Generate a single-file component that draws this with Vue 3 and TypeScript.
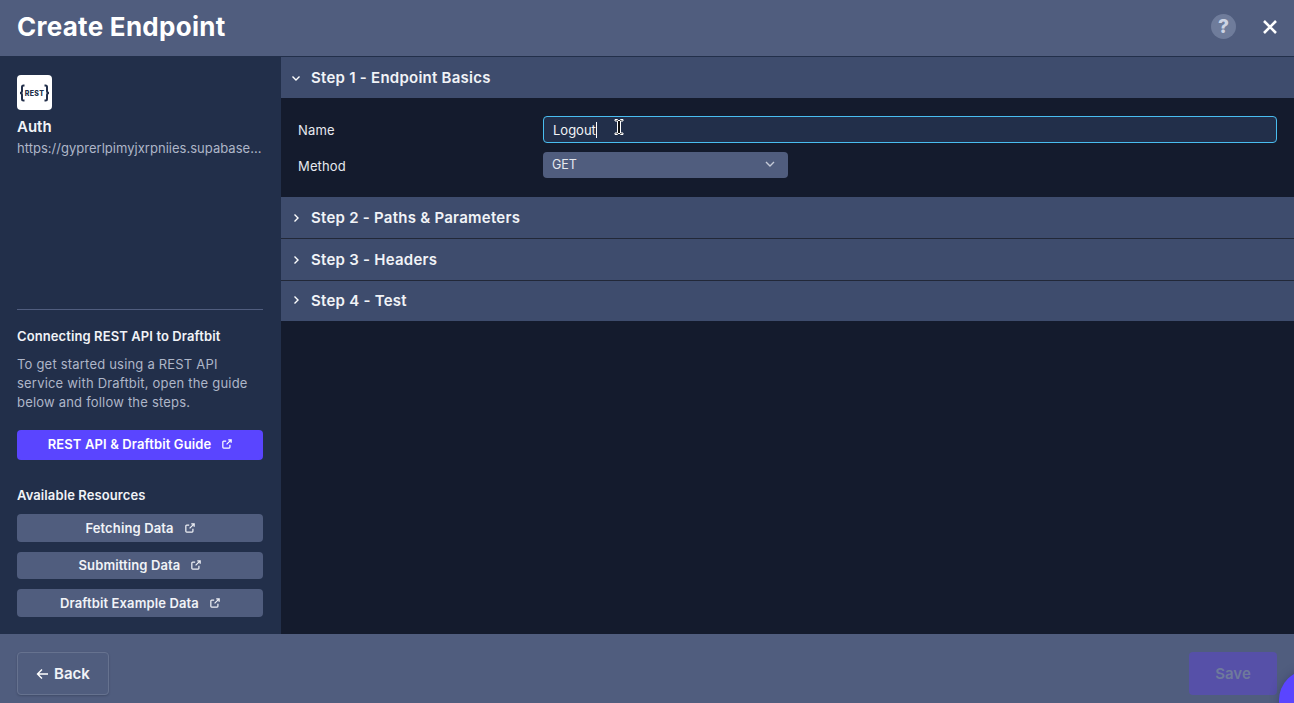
<script setup lang="ts">
const resources: string[] = ['Fetching Data', 'Submitting Data', 'Draftbit Example Data']
const closedSteps: string[] = ['Step 2 - Paths & Parameters', 'Step 3 - Headers', 'Step 4 - Test']
</script>

<template>
  <div class="page">
    <header class="top">
      <h1>Create Endpoint</h1>
      <div class="top-actions">
        <span class="help">?</span>
        <svg class="close" width="16" height="16" viewBox="0 0 16 16"><path d="M2 2l12 12M14 2L2 14" stroke="#fff" stroke-width="2.6" /></svg>
      </div>
    </header>
    <div class="middle">
      <aside class="side">
        <div class="logo">
          <svg width="31" height="18" viewBox="0 0 31 18">
            <path d="M5.500 1.500H4.500Q3 1.500 3 3V7Q3 9 1 9Q3 9 3 11V15Q3 16.500 4.500 16.500H5.500M25.500 1.500H26.500Q28 1.500 28 3V7Q28 9 30 9Q28 9 28 11V15Q28 16.500 26.500 16.500H25.500" fill="none" stroke="#222f4a" stroke-width="2" />
            <text x="15.500" y="11.700" text-anchor="middle" class="logo-text">REST</text>
          </svg>
        </div>
        <div class="name">Auth</div>
        <div class="url">https://gyprerlpimyjxrpniies.supabase...</div>
        <div class="spacer"></div>
        <div class="rule"></div>
        <div class="guide-title">Connecting REST API to Draftbit</div>
        <p class="guide-text">To get started using a REST API service with Draftbit, open the guide below and follow the steps.</p>
        <a class="btn primary">REST API &amp; Draftbit Guide
          <svg class="ext" width="10" height="10" viewBox="0 0 12 12"><path d="M9.500 7v3a1 1 0 0 1-1 1H2a1 1 0 0 1-1-1V3.500a1 1 0 0 1 1-1h3M7.500 1H11v3.500M11 1L5.500 6.500" fill="none" stroke="#fff" stroke-width="1.500" /></svg>
        </a>
        <div class="res-title">Available Resources</div>
        <div class="res-list">
          <a v-for="r in resources" :key="r" class="btn muted">{{ r }}
            <svg class="ext" width="10" height="10" viewBox="0 0 12 12"><path d="M9.500 7v3a1 1 0 0 1-1 1H2a1 1 0 0 1-1-1V3.500a1 1 0 0 1 1-1h3M7.500 1H11v3.500M11 1L5.500 6.500" fill="none" stroke="#eef0f5" stroke-width="1.500" /></svg>
          </a>
        </div>
      </aside>
      <main class="content">
        <div class="step first">
          <svg class="chev" width="10" height="10" viewBox="0 0 10 10"><path d="M1.500 3.500L5 7l3.500-3.500" fill="none" stroke="#fff" stroke-width="1.400" /></svg>
          <span>Step 1 - Endpoint Basics</span>
        </div>
        <div class="form">
          <label class="row-name">Name</label>
          <div class="input">Logout<i class="caret"></i></div>
          <label class="row-method">Method</label>
          <div class="select">GET
            <svg width="10" height="10" viewBox="0 0 10 10"><path d="M1 3l4 4 4-4" fill="none" stroke="#c5cbd8" stroke-width="1.400" /></svg>
          </div>
        </div>
        <div v-for="s in closedSteps" :key="s" class="step closed">
          <svg class="chev" width="10" height="10" viewBox="0 0 10 10"><path d="M3.500 1.500L7 5 3.500 8.500" fill="none" stroke="#fff" stroke-width="1.400" /></svg>
          <span>{{ s }}</span>
        </div>
      </main>
    </div>
    <footer class="bottom">
      <a class="back"><svg width="13" height="12" viewBox="0 0 13 12"><path d="M12 6H2M6 1.500L1.500 6 6 10.500" fill="none" stroke="#fff" stroke-width="1.400" /></svg>Back</a>
      <a class="save">Save</a>
      <span class="bubble"></span>
    </footer>
    <svg class="cursor" width="12" height="18" viewBox="0 0 12 18"><path d="M2 1.500h2.500L6 3l1.500-1.500H10V3H7.500v12H10v1.500H7.500L6 15l-1.500 1.500H2V15h2.500V3H2z" fill="#111" stroke="#fff" stroke-width="1" /></svg>
  </div>
</template>

<style>
html, body { margin: 0; background: #141b2d; }
</style>

<style scoped>
.page {
  position: relative;
  width: 1294px;
  height: 703px;
  overflow: hidden;
  display: flex;
  flex-direction: column;
  font-family: Inter, "Liberation Sans", sans-serif;
  color: #fff;
  background: #141b2d;
}
.top {
  height: 57px;
  flex: none;
  box-sizing: border-box;
  background: #505d7e;
  border-bottom: 1px solid #222f4a;
  display: flex;
  align-items: center;
  justify-content: space-between;
  padding: 0 16px 3px 17px;
}
h1 { margin: 0; font-size: 26px; font-weight: 700; line-height: 32px; letter-spacing: 0.27px; }
.top-actions { display: flex; align-items: center; gap: 26px; }
.help {
  width: 25px; height: 25px; border-radius: 50%;
  background: #6f7c9b; color: #ccd3e4;
  display: flex; align-items: center; justify-content: center;
  font-size: 19px; font-weight: 800;
}
.close { display: block; }
.middle { flex: 1; display: flex; min-height: 0; }
.side {
  width: 281px; flex: none; box-sizing: border-box;
  background: #222f4a;
  padding: 18px 18px 17px 17px;
  display: flex; flex-direction: column;
}
.logo {
  width: 35px; height: 35px; background: #fff; border-radius: 4px;
  display: flex; align-items: center; justify-content: center;
}
.logo-text { font-size: 7px; font-weight: 800; fill: #222f4a; font-family: Inter, sans-serif; letter-spacing: 0.3px; }
.name { margin-top: 7px; font-size: 15px; font-weight: 600; line-height: 20px; color: #f1f3f7; }
.url {
  margin-top: 2px; font-size: 13px; line-height: 18px; color: #aeb6c8;
  letter-spacing: 0.02px; white-space: nowrap;
}
.spacer { flex: 1; }
.rule { height: 1px; background: #505d7e; margin-bottom: 18px; }
.guide-title { font-size: 13px; font-weight: 600; line-height: 16px; color: #f1f3f7; letter-spacing: 0.1px; }
.guide-text { margin: 11px 0 18px; font-size: 13px; line-height: 19px; color: #aeb6c8; letter-spacing: 0.2px; }
.btn {
  display: flex; align-items: center; justify-content: center; gap: 11px;
  border-radius: 4px; font-size: 13px; font-weight: 600; color: #f1f3f7; letter-spacing: 0.12px;
  box-sizing: border-box; padding-bottom: 1px;
}
.primary { height: 30px; background: #5a45ff; color: #fff; padding-bottom: 2px; }
.res-title { margin-top: 27px; font-size: 13px; font-weight: 600; line-height: 16px; color: #f1f3f7; letter-spacing: 0.1px; }
.res-list { margin-top: 11px; display: flex; flex-direction: column; gap: 10px; }
.muted { height: 27.600px; background: #505d7e; }
.ext { flex: none; }
.content { flex: 1; min-width: 0; display: flex; flex-direction: column; }
.step {
  display: flex; align-items: center; box-sizing: border-box;
  background: #3e4c6d; padding-left: 10px; gap: 10px;
  font-size: 15px; font-weight: 600; color: #f1f3f7; letter-spacing: 0.25px;
}
.first { height: 41px; }
.closed { height: 42px; border-bottom: 1px solid #222838; }
.closed:last-child { height: 40px; border-bottom: 0; padding-bottom: 2px; }
.form {
  height: 99px; box-sizing: border-box;
  padding: 18px 17px 0;
  display: grid; grid-template-columns: 245px 1fr; grid-template-rows: 27px 26px; row-gap: 9px;
  font-size: 13px;
}
label { color: #e6e9ef; align-self: center; letter-spacing: 0.15px; }
.row-name { padding-top: 1px; }
.row-method { padding-top: 2px; }
.input {
  box-sizing: border-box; background: #222f4a;
  border: 1px solid #49bdf0; border-radius: 4px;
  display: flex; align-items: center; padding: 1px 9px 0;
  color: #f1f3f7;
}
.caret { display: block; width: 1px; height: 16px; background: #fff; }
.select {
  box-sizing: border-box; width: 245px; background: #505d7e; border-radius: 4px;
  display: flex; align-items: center; justify-content: space-between;
  padding: 0 13px 2px 9px; font-size: 12.500px; color: #e6e9ef;
}
.bottom {
  height: 69px; flex: none; box-sizing: border-box;
  background: #505d7e; position: relative;
  display: flex; align-items: flex-start; justify-content: space-between;
  padding: 18px 17px 0;
}
.back {
  box-sizing: border-box; width: 92px; height: 43px;
  border: 1px solid #66728f; border-radius: 4px;
  display: flex; align-items: center; justify-content: center; gap: 5px;
  font-size: 15px; font-weight: 600; color: #f1f3f7;
  box-shadow: 0 1px 2px rgba(20, 27, 45, 0.25);
}
.save {
  width: 88px; height: 43px; background: #5650a8; border-radius: 4px;
  display: flex; align-items: center; justify-content: center;
  font-size: 15px; font-weight: 600; color: #6f7a9c;
}
.bubble {
  position: absolute; left: 1279px; top: 36px; width: 60px; height: 60px;
  border-radius: 50%; background: #5a45ff;
  box-shadow: 0 0 10px rgba(40, 40, 90, 0.4);
}
.cursor { position: absolute; left: 613px; top: 118px; }
</style>
